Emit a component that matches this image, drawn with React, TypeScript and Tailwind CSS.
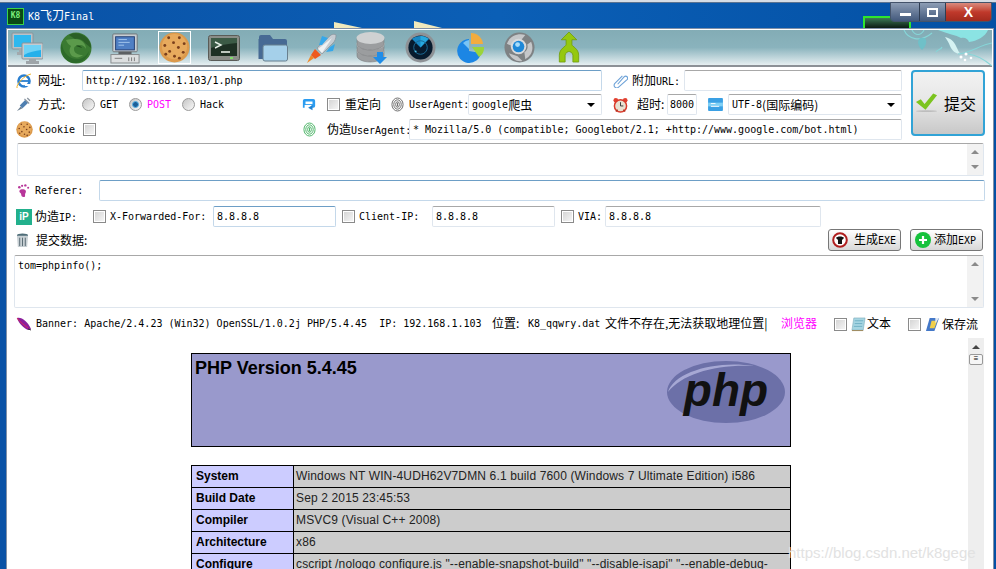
import React from 'react';

// Window font: latin cells are 6px wide, CJK is set a size up through <C>
const C: React.FC<{ children: React.ReactNode; className?: string }> = ({ children, className }) => (
  <span className={`text-[12px] font-['Noto_Sans_CJK_SC',sans-serif] ${className ?? ''}`}>{children}</span>
);

const Network = () => (
  <svg viewBox="0 0 32 32" className="w-[32px] h-[32px]">
    <rect x="1" y="1" width="21" height="16" rx="1" fill="#b9c2c8" stroke="#8b9499" />
    <rect x="3" y="3" width="17" height="12" fill="#2fb8ee" />
    <path d="M8 17h7v3h3v3H6v-3h2z" fill="#a2a9ad" />
    <rect x="11" y="11" width="21" height="16" rx="1" fill="#c4cbd0" stroke="#8b9499" />
    <rect x="13" y="13" width="17" height="12" fill="#25b0ea" />
    <path d="M13 13h17v5c-6 1-12 2-17 5z" fill="#6fd2f5" />
    <path d="M18 27h7v2h3v3H15v-3h3z" fill="#9ea5a9" />
  </svg>
);

const GreenFox = () => (
  <svg viewBox="0 0 32 32" className="w-[32px] h-[32px]">
    <circle cx="16" cy="16" r="15.5" fill="#3a7a32" />
    <path d="M9 3c5-3 13-2 18 3 3 3 4 7 4 10l-6-5c-2-3-6-5-10-4z" fill="#2a5f26" />
    <path d="M2 12c1 9 8 16 17 15 5-1 8-4 10-8-1 7-7 12-14 12C7 31 1 24 1 16c0-1 0-3 1-4z" fill="#2c6a2a" />
    <path d="M6 8c1 3 3 5 5 6-2 3-2 7 1 10 3 2 8 2 11-1-5 0-9-2-9-6 0-3 3-4 6-4 3 0 5 2 6 4 0-6-5-10-11-10-3 0-6 0-9 1z" fill="#5b9a4b" />
    <path d="M16 14c2-1 5 0 6 2-2-1-4-1-6-2z" fill="#1f4d1c" />
  </svg>
);

const Computer = () => (
  <svg viewBox="0 0 32 32" className="w-[30px] h-[32px]">
    <rect x="3" y="1" width="26" height="19" rx="1" fill="#c7cdd2" stroke="#6f7478" />
    <rect x="6" y="4" width="20" height="14" fill="#4f7fc4" stroke="#223c70" />
    <path d="M9 7h9M9 10h12M9 13h6" stroke="#a5c8ee" />
    <rect x="9" y="20" width="14" height="3" fill="#5c6063" />
    <rect x="1" y="23" width="30" height="9" fill="#dcdfe0" stroke="#84888a" />
    <path d="M5 27h8M20 26v4M23 26v4M26 26v4" stroke="#777" />
  </svg>
);

const Cookie: React.FC<{ size: string }> = ({ size }) => (
  <svg viewBox="0 0 32 32" className={size}>
    <circle cx="16" cy="16" r="15.5" fill="#dc9a4c" />
    <circle cx="16" cy="15" r="13" fill="#e7aa5d" />
    {[[10, 6], [21, 6], [15, 11], [26, 12], [6, 14], [20, 16], [11, 20], [25, 21], [16, 25], [7, 23], [21, 27]].map(([x, y]) => (
      <circle key={`${x}-${y}`} cx={x} cy={y} r="1.5" fill="#7a3f1c" />
    ))}
  </svg>
);

const Terminal = () => (
  <svg viewBox="0 0 32 26" className="w-[32px] h-[26px]">
    <rect x="0.5" y="0.5" width="31" height="25" rx="2" fill="#8a8d88" stroke="#5a5c58" />
    <rect x="3" y="3" width="26" height="18" fill="#1e3024" />
    <path d="M3 3h26v5c-9 1-18 2-26 5z" fill="#3c5a46" />
    <path d="M7 7l6 3-6 3" fill="none" stroke="#e8f0e8" strokeWidth="1.4" />
    <path d="M13 17h9" stroke="#e8f0e8" strokeWidth="1.6" />
    <rect x="22" y="22" width="3" height="2" fill="#7fdc6a" />
  </svg>
);

const Folder = () => (
  <svg viewBox="0 0 30 28" className="w-[30px] h-[28px]">
    <path d="M1 3a2 2 0 012-2h9l3 4h12a2 2 0 012 2v4H1z" fill="#476a94" />
    <rect x="0.5" y="5" width="5" height="20" fill="#476a94" />
    <rect x="5" y="11" width="24.5" height="16" rx="2" fill="#a5d0ea" stroke="#69808f" />
  </svg>
);

const Rocket = () => (
  <svg viewBox="0 0 32 32" className="w-[32px] h-[32px]">
    <path d="M1 31l7-5-3-3z" fill="#f08a28" />
    <path d="M9 17l6 6-6 4-4-4z" fill="#ee5a1f" />
    <path d="M11 16L25 3c2-1 4-1 5 0 0 3-1 6-3 8L16 22z" fill="#c6ccd2" stroke="#848c94" strokeWidth="0.6" />
    <path d="M12 17L26 6l-10 15z" fill="#eef1f3" />
    <path d="M13 13L16 4l6 2-6 7zM20 20l7-1 2-7-5 3z" fill="#35a7ea" />
  </svg>
);

const Database = () => (
  <svg viewBox="0 0 32 32" className="w-[32px] h-[32px]">
    {[18, 12, 6].map((y) => (
      <g key={y}>
        <path d={`M1 ${y}v6c0 3 6 6 13 6s14-3 14-6v-6z`} fill="#9b9d9f" stroke="#737577" strokeWidth="0.5" />
        <ellipse cx="14.5" cy={y} rx="14" ry="6" fill="#cfd1d2" />
      </g>
    ))}
    <path d="M21 20h6v5h4l-7 7-7-7h4z" fill="#1f8de8" />
  </svg>
);

const Radar = () => (
  <svg viewBox="0 0 32 32" className="w-[31px] h-[31px]">
    <circle cx="16" cy="16" r="15.5" fill="#8e9296" />
    <circle cx="16" cy="16" r="12.5" fill="#071b2e" />
    <path d="M16 16L7 7c5-4 13-4 18 0z" fill="#1787c4" />
    <path d="M16 16V4c3 0 6 1 8 3z" fill="#28a9de" />
    <circle cx="16" cy="16" r="7" fill="none" stroke="#1b6a95" />
    <circle cx="11" cy="20" r="1" fill="#4fc6ef" />
  </svg>
);

const Pie = () => (
  <svg viewBox="0 0 30 32" className="w-[30px] h-[32px]">
    <path d="M14 7a12 12 0 1 0 12 14L14 19z" fill="#1c86e4" />
    <path d="M8 11a10 10 0 0 1 6-3v9z" fill="#79c4f5" />
    <path d="M16 1a12 12 0 0 1 12 11H16z" fill="#f2ac3f" />
    <path d="M17 15h12a11 11 0 0 1-5 10z" fill="#9bd43a" />
  </svg>
);

const Orb = () => (
  <svg viewBox="0 0 32 32" className="w-[31px] h-[31px]">
    <circle cx="16" cy="16" r="15.5" fill="#7e8284" />
    <path d="M3 12C6 4 14 1 22 3l-4 5c-5-1-9 1-11 6zM28 10c3 7 1 14-6 18l-1-7c3-2 4-5 3-8zM5 22l9 3 5 5c-6 1-11-2-14-8z" fill="#c5c7c9" />
    <circle cx="15" cy="15" r="8" fill="#d8dadc" />
    <circle cx="15" cy="15" r="6" fill="#1e88d8" />
    <circle cx="14" cy="13" r="2.5" fill="#a7dcfa" />
  </svg>
);

const Merge = () => (
  <svg viewBox="0 0 22 32" className="w-[22px] h-[31px]">
    <path d="M11 0l8 8h-5v5c0 2 7 4 7 11v7h-6v-7c0-3-4-4-4-4s-4 1-4 4v7H1v-7c0-7 7-9 7-11V8H3z" fill="#95c80f" stroke="#6e9a0a" strokeWidth="0.8" />
  </svg>
);

const IeIcon = () => (
  <svg viewBox="0 0 16 16" className="w-[16px] h-[16px]">
    <circle cx="8" cy="8" r="5.5" fill="none" stroke="#2a7fd0" strokeWidth="2.6" />
    <path d="M4 8h9" stroke="#2a7fd0" strokeWidth="1.8" />
    <path d="M9 11h5v2H9z" fill="#fff" />
    <path d="M1 15C0 11 9 2 15 1" fill="none" stroke="#f0b429" strokeWidth="1" />
  </svg>
);

const Syringe = () => (
  <svg viewBox="0 0 16 16" className="w-[15px] h-[15px]">
    <path d="M1 15l4-5 2 2z" fill="#6b7f92" />
    <path d="M4 9l6-6 3 3-6 6z" fill="#4f7fb0" />
    <path d="M9 2l5 5M12 1l3 3" stroke="#8c97a2" strokeWidth="1.4" />
  </svg>
);

const Refresh = () => (
  <svg viewBox="0 0 16 16" className="w-[14px] h-[14px]">
    <path d="M3 1h10a2 2 0 012 2v6a2 2 0 01-2 2h-2v-3H3v3H1V3a2 2 0 012-2z" fill="#2b9cf0" />
    <path d="M4 4h8v3H4z" fill="#fff" />
    <path d="M12 8v6l-5-3z" fill="#1f80d0" />
  </svg>
);

const Fingerprint: React.FC<{ color: string }> = ({ color }) => (
  <svg viewBox="0 0 14 16" className="w-[13px] h-[15px]" fill="none" stroke={color}>
    <ellipse cx="7" cy="8" rx="6" ry="7" />
    <ellipse cx="7" cy="8" rx="4" ry="5" />
    <ellipse cx="7" cy="8" rx="2" ry="3" />
    <path d="M7 6v4" />
  </svg>
);

const Clip = () => (
  <svg viewBox="0 0 16 16" className="w-[15px] h-[15px]" fill="none" stroke="#6fa3d8" strokeWidth="1.2">
    <path d="M5 12l7-8a2 2 0 013 3l-9 8a2.5 2.5 0 01-4-4l8-8" />
  </svg>
);

const Clock = () => (
  <svg viewBox="0 0 16 16" className="w-[15px] h-[16px]">
    <circle cx="3" cy="3" r="2.5" fill="#e2402f" />
    <circle cx="13" cy="3" r="2.5" fill="#e2402f" />
    <circle cx="8" cy="9" r="6.5" fill="#e8e0d0" stroke="#d93a2a" strokeWidth="1.6" />
    <path d="M8 5v4h3" stroke="#333" fill="none" />
    <path d="M3 15l2-2M13 15l-2-2" stroke="#b5301f" strokeWidth="1.4" />
  </svg>
);

const BlueBox = () => (
  <svg viewBox="0 0 16 14" className="w-[15px] h-[13px]">
    <rect width="16" height="14" rx="1" fill="#3aa0e4" />
    <rect y="5" width="16" height="4" fill="#7fd0f6" />
    <path d="M3 6h5M3 9h9" stroke="#fff" />
  </svg>
);

const Check = () => (
  <svg viewBox="0 0 24 20" className="w-[23px] h-[20px]">
    <path d="M1 9l5-3 4 5L19 0l4 2-12 15z" fill="#7cc41f" />
    <ellipse cx="12" cy="18.5" rx="11" ry="1" fill="#bdbdbd" />
  </svg>
);

const Feet = () => (
  <svg viewBox="0 0 14 16" className="w-[13px] h-[15px]" fill="#b8379a">
    <path d="M4 7c4-1 7 1 5 4-1 2 1 4-2 4-3 0-2-3-3-4-2-1-2-3 0-4z" />
    <circle cx="2.5" cy="4.5" r="1.4" />
    <circle cx="5.5" cy="3" r="1.2" />
    <circle cx="9" cy="2.5" r="1.3" />
    <circle cx="12" cy="5" r="1.1" />
  </svg>
);

const Trash = () => (
  <svg viewBox="0 0 14 16" className="w-[13px] h-[15px]">
    <ellipse cx="7" cy="2.5" rx="6" ry="2" fill="#4f6d78" />
    <path d="M1 3h12l-1 12H2z" fill="#c8d0d4" />
    <path d="M4 5v9M7 5v9M10 5v9" stroke="#53666e" />
  </svg>
);

const Feather = () => (
  <svg viewBox="0 0 16 14" className="w-[16px] h-[14px]">
    <path d="M1 1c5-1 10 3 14 11L12 13C8 11 3 7 1 1z" fill="#8a1f9c" />
    <path d="M1 1c3 4 7 7 11 10" stroke="#d92a5a" fill="none" />
    <path d="M12 12l3 1" stroke="#333" />
  </svg>
);

const StopIcon = () => (
  <svg viewBox="0 0 16 16" className="w-[16px] h-[16px]">
    <circle cx="8" cy="8" r="6.8" fill="#fff" stroke="#b01f1f" strokeWidth="2" />
    <path d="M4 6c1-2 7-2 8 0l-2 2v4H6V8z" fill="#111" />
  </svg>
);

const PlusIcon = () => (
  <svg viewBox="0 0 16 16" className="w-[16px] h-[16px]">
    <circle cx="8" cy="8" r="8" fill="#16c23c" />
    <path d="M8 4v8M4 8h8" stroke="#fff" strokeWidth="2.2" />
  </svg>
);

const DocIcon = () => (
  <svg viewBox="0 0 16 16" className="w-[15px] h-[15px]">
    <path d="M3 1h12l-2 13H1z" fill="#a5d5e2" stroke="#7aa9b8" strokeWidth="0.6" />
    <path d="M4 4h9M4 7h8M3 10h9" stroke="#6fb0c4" />
    <path d="M1 14h12v1H1z" fill="#9c8250" />
  </svg>
);

const PenIcon = () => (
  <svg viewBox="0 0 16 16" className="w-[15px] h-[15px]">
    <path d="M5 1h10L10 15H1z" fill="#4478c8" />
    <path d="M7 4h6l-3 8H5z" fill="#f0cf4a" />
    <path d="M11 1h4l-4 6z" fill="#dfe8f4" />
  </svg>
);

const Floral = () => (
  <svg viewBox="0 0 92 36" className="absolute right-0 top-0 w-[92px] h-[36px]" fill="none" stroke="#86d6d8" strokeWidth="1.1">
    <path d="M4 0c4 9 16 13 28 3M12 0c3 6 9 6 12 0M36 22c2-3 5-2 6-5" />
    <path d="M20 8c-4 4-1 9 2 12 3-3 6-8 3-12z" fill="#6fc0c8" stroke="none" />
    <path d="M38 0h50c-3 7-11 11-19 12-1-3-4-5-8-4-5-3-13-4-23-8z" fill="#8be3e3" stroke="none" />
    <path d="M45 7c5 1 9 4 11 9 2 4 3 7 5 8-5 0-9-3-11-8-1-3-3-6-5-9z" fill="#d4f2f2" stroke="none" />
    <path d="M58 24c12-1 22-9 34-11M68 24c9 1 17 6 24 12" />
    <circle cx="61" cy="27" r="1.5" fill="#fff" stroke="none" />
    <circle cx="66" cy="24" r="1.5" fill="#fff" stroke="none" />
    <circle cx="65" cy="30" r="1.3" fill="#fff" stroke="none" />
    <circle cx="71" cy="28" r="1.3" fill="#fff" stroke="none" />
  </svg>
);

const Radio: React.FC<{ on?: boolean }> = ({ on }) => (
  <span className="flex w-[13px] h-[13px] shrink-0 items-center justify-center rounded-full border border-[#9a9a9a] bg-gradient-to-br from-[#c4c4c4] to-[#fafafa]">
    {on && <span className="w-[7px] h-[7px] rounded-full bg-[#1d5f98] border border-[#58b4e8]" />}
  </span>
);

const Box = () => (
  <span className="block w-[13px] h-[13px] shrink-0 border border-[#8a8a8a] bg-gradient-to-br from-[#d2d2d2] to-[#f8f8f8] shadow-[inset_0_0_0_1px_#fff]" />
);

const plainField = 'flex items-center shrink-0 whitespace-nowrap bg-white border border-[#dfe6ee] border-t-[#a8a8a8] rounded-[2px] px-[3px]';
const blueField = 'flex items-center shrink-0 whitespace-nowrap bg-white border border-[#c4d8ea] border-t-[#6d9ec6] rounded-[2px] px-[3px]';

const Arrow = () => <span className="ml-auto mr-[3px] border-x-[4px] border-t-[4px] border-x-transparent border-t-black" />;

const ScrollArrows: React.FC<{ className?: string }> = ({ className }) => (
  <div className={`flex flex-col justify-between items-center w-[16px] py-[6px] bg-[#f2f2f2] ${className ?? ''}`}>
    <span className="border-x-[4px] border-b-[4px] border-x-transparent border-b-[#8a8a8a]" />
    <span className="border-x-[4px] border-t-[4px] border-x-transparent border-t-[#8a8a8a]" />
  </div>
);

const toolIcons = [
  <Network />, <GreenFox />, <Computer />, <Cookie size="w-[31px] h-[31px]" />, <Terminal />, <Folder />,
  <Rocket />, <Database />, <Radar />, <Pie />, <Orb />, <Merge />,
];

const infoRows = [
  ['System', 'Windows NT WIN-4UDH62V7DMN 6.1 build 7600 (Windows 7 Ultimate Edition) i586'],
  ['Build Date', 'Sep 2 2015 23:45:53'],
  ['Compiler', 'MSVC9 (Visual C++ 2008)'],
  ['Architecture', 'x86'],
  ['Configure', 'cscript /nologo configure.js "--enable-snapshot-build" "--disable-isapi" "--enable-debug-pack" "--without-mssql" "--without-pdo-mssql"'],
];

export default function App() {
  return (
    <div className="relative w-[996px] h-[569px] overflow-hidden bg-gradient-to-r from-[#0a52a6] via-[#0b5fb6] to-[#0450a4] text-[10px] leading-[14px] text-black font-['DejaVu_Sans_Mono','Noto_Sans_CJK_SC',monospace]">
      {/* desktop bits showing through the glass */}
      <div className="absolute left-[334px] top-[22px] w-[28px] h-[6px] bg-[#f0e9bd] [clip-path:polygon(0_0,100%_100%,0_100%)]" />
      <div className="absolute left-[414px] top-[21px] w-[28px] h-[7px] bg-[#f0e9bd] [clip-path:polygon(0_0,100%_100%,0_100%)]" />
      <div className="absolute left-[863px] top-[16px] w-[48px] h-[12px] border-2 border-b-0 border-[#2ee62e] bg-gradient-to-b from-[#3c7c56] to-[#0c1c14]" />

      <div className="h-[3px] bg-[#d6dde6] border-b border-[#5b7391]" />

      {/* title bar */}
      <div className="flex items-center h-[26px] pl-[7px] text-white">
        <div className="flex items-center justify-center w-[17px] h-[17px] bg-[#0a4a14] border border-[#3bd44a] text-[8px] font-bold text-[#7cf07c] shrink-0">K8</div>
        <span className="ml-[4px] text-[10px]">K8<C className="text-[11px]">飞刀</C>Final</span>
      </div>

      {/* caption buttons */}
      <div className="absolute left-[890px] top-[2px] flex h-[20px] w-[102px] rounded-b-[4px] border border-[#44536a] overflow-hidden">
        <div className="flex w-[29px] items-end justify-center pb-[5px] bg-gradient-to-b from-[#8d9db4] to-[#43597c] border-r border-[#2f3d52]">
          <span className="w-[11px] h-[3px] bg-white" />
        </div>
        <div className="flex w-[26px] items-center justify-center bg-gradient-to-b from-[#8d9db4] to-[#43597c] border-r border-[#2f3d52]">
          <span className="w-[11px] h-[9px] border-2 border-white" />
        </div>
        <div className="flex flex-1 items-center justify-center bg-gradient-to-b from-[#d98a7e] via-[#c0392b] to-[#a32a1e] text-white text-[14px] font-bold font-['Liberation_Sans',sans-serif]">X</div>
      </div>

      {/* client area */}
      <div className="ml-[7px] mr-[3px] h-[540px] border-l border-r border-white border-t bg-white outline-1 outline-[#8090a8]">
        <div className="relative flex items-center h-[37px] border-b-2 border-[#8c9196] bg-gradient-to-b from-[#83acb5] via-[#8ab3bd] via-50% to-[#e6eff1] pl-[2px]">
          <Floral />
          {toolIcons.map((icon, i) => (
            <div key={i} className={`flex items-center justify-center w-[33px] h-[33px] mr-[16.3px] shrink-0 ${i === 3 ? 'border border-white' : ''}`}>
              {icon}
            </div>
          ))}
        </div>

        {/* request form */}
        <div className="flex pl-[8px] pt-[3px]">
          <div className="flex flex-col w-[886px] shrink-0">
            <div className="flex items-center h-[21px]">
              <span className="flex w-[22px] shrink-0"><IeIcon /></span>
              <span className="w-[44px] shrink-0"><C>网址:</C></span>
              <div className={`${blueField} w-[520px] h-[21px]`}>http://192.168.1.103/1.php</div>
              <span className="flex w-[19px] ml-[11px] shrink-0"><Clip /></span>
              <span className="w-[52px] shrink-0 whitespace-nowrap"><C>附加</C>URL:</span>
              <div className={`${plainField} w-[218px] h-[21px]`} />
            </div>

            <div className="flex items-center h-[21px] mt-[3px]">
              <span className="flex w-[22px] shrink-0"><Syringe /></span>
              <span className="w-[44px] shrink-0"><C>方式:</C></span>
              <span className="flex w-[18px] shrink-0"><Radio /></span>
              <span className="w-[29px] shrink-0">GET</span>
              <span className="flex w-[18px] shrink-0"><Radio on /></span>
              <span className="w-[35px] shrink-0 text-[#ff00ff]">POST</span>
              <span className="flex w-[18px] shrink-0"><Radio /></span>
              <span className="w-[102px] shrink-0">Hack</span>
              <span className="flex w-[25px] shrink-0"><Refresh /></span>
              <span className="flex w-[18px] shrink-0"><Box /></span>
              <span className="w-[46px] shrink-0"><C>重定向</C></span>
              <span className="flex w-[18px] shrink-0"><Fingerprint color="#666666" /></span>
              <span className="w-[59px] shrink-0">UserAgent:</span>
              <div className={`${plainField} w-[134px] h-[21px]`}>google<C>爬虫</C><Arrow /></div>
              <span className="flex w-[24px] ml-[11px] shrink-0"><Clock /></span>
              <span className="w-[30px] shrink-0 whitespace-nowrap"><C>超时:</C></span>
              <div className={`${plainField} w-[30px] h-[21px] !px-[2px]`}>8000</div>
              <span className="flex w-[20px] ml-[11px] shrink-0"><BlueBox /></span>
              <div className={`${plainField} w-[174px] h-[21px]`}>UTF-8<C>(国际编码)</C><Arrow /></div>
            </div>

            <div className="flex items-center h-[21px] mt-[4px]">
              <span className="flex w-[23px] shrink-0"><Cookie size="w-[17px] h-[17px]" /></span>
              <span className="w-[44px] shrink-0">Cookie</span>
              <span className="flex w-[220px] shrink-0"><Box /></span>
              <span className="flex w-[24px] shrink-0"><Fingerprint color="#44b060" /></span>
              <span className="w-[82px] shrink-0 whitespace-nowrap"><C>伪造</C>UserAgent:</span>
              <div className={`${plainField} w-[493px] h-[21px]`}>* Mozilla/5.0 (compatible; Googlebot/2.1; +http://www.google.com/bot.html)</div>
            </div>
          </div>

          <div className="flex items-center w-[74px] h-[66px] ml-[9px] pl-[2px] shrink-0 rounded-[4px] border-2 border-[#31a3d6] bg-gradient-to-b from-[#f2f2f2] via-[#e6e6e6] to-[#c8c8c8]">
            <Check />
            <span className="ml-[6px] text-[16px] whitespace-nowrap font-['Noto_Sans_CJK_SC',sans-serif]">提交</span>
          </div>
        </div>

        {/* cookie text */}
        <div className={`${plainField} justify-end w-[967px] h-[33px] ml-[9px] mt-[3px] !px-0`}>
          <ScrollArrows className="h-full" />
        </div>

        <div className="flex items-center h-[21px] ml-[9px] mt-[4px]">
          <span className="flex w-[18px] shrink-0"><Feet /></span>
          <span className="w-[64px] shrink-0">Referer:</span>
          <div className={`${blueField} w-[886px] h-[21px]`} />
        </div>

        {/* spoofed address */}
        <div className="flex items-center h-[21px] ml-[8px] mt-[5px]">
          <span className="flex items-center justify-center w-[16px] h-[16px] mr-[3px] shrink-0 bg-[#22b08c] text-white text-[10px] font-bold font-['Liberation_Sans',sans-serif]">iP</span>
          <span className="w-[58px] shrink-0 whitespace-nowrap"><C>伪造</C>IP:</span>
          <span className="flex w-[17px] shrink-0"><Box /></span>
          <span className="w-[103px] shrink-0">X-Forwarded-For:</span>
          <div className={`${blueField} w-[123px] h-[21px]`}>8.8.8.8</div>
          <span className="flex w-[17px] ml-[6px] shrink-0"><Box /></span>
          <span className="w-[73px] shrink-0">Client-IP:</span>
          <div className={`${plainField} w-[123px] h-[21px]`}>8.8.8.8</div>
          <span className="flex w-[17px] ml-[6px] shrink-0"><Box /></span>
          <span className="w-[27px] shrink-0">VIA:</span>
          <div className={`${plainField} w-[216px] h-[21px]`}>8.8.8.8</div>
        </div>

        <div className="flex items-center h-[22px] ml-[8px] mt-[2px]">
          <span className="flex w-[20px] shrink-0"><Trash /></span>
          <C>提交数据:</C>
          <div className="flex items-center w-[73px] h-[22px] ml-auto rounded-[3px] border border-[#777] bg-gradient-to-b from-white to-[#d8d8d8] pl-[3px] whitespace-nowrap">
            <StopIcon />
            <span className="ml-[6px]"><C>生成</C>EXE</span>
          </div>
          <div className="flex items-center w-[73px] h-[22px] ml-[9px] mr-[9px] rounded-[3px] border border-[#777] bg-gradient-to-b from-white to-[#d8d8d8] pl-[4px] whitespace-nowrap">
            <PlusIcon />
            <span className="ml-[3px]"><C>添加</C>EXP</span>
          </div>
        </div>

        {/* post body */}
        <div className={`${plainField} !items-start w-[970px] h-[53px] ml-[6px] mt-[4px] !px-0`}>
          <span className="ml-[3px] mt-[3px]">tom=phpinfo();</span>
          <ScrollArrows className="h-full ml-auto" />
        </div>

        {/* banner */}
        <div className="flex items-center h-[16px] ml-[8px] mt-[8px] whitespace-pre">
          <span className="flex w-[20px] shrink-0"><Feather /></span>
          <span className="w-[456px] shrink-0">Banner: Apache/2.4.23 (Win32) OpenSSL/1.0.2j PHP/5.4.45  IP: 192.168.1.103</span>
          <span className="w-[36px] shrink-0"><C>位置:</C></span>
          <span className="w-[77px] shrink-0">K8_qqwry.dat</span>
          <span className="w-[176px] shrink-0"><C>文件不存在,无法获取地理位置|</C></span>
          <span className="w-[53px] shrink-0"><C className="text-[#ff00ff]">浏览器</C></span>
          <span className="flex w-[17px] shrink-0"><Box /></span>
          <span className="flex w-[16px] shrink-0"><DocIcon /></span>
          <span className="w-[41px] shrink-0"><C>文本</C></span>
          <span className="flex w-[17px] shrink-0"><Box /></span>
          <span className="flex w-[17px] shrink-0"><PenIcon /></span>
          <C>保存流</C>
        </div>

        {/* php info page */}
        <div className="flex ml-[6px] mt-[6px] h-[240px] overflow-hidden font-['Liberation_Sans',sans-serif] text-[12px]">
          <div className="w-[954px] shrink-0 pt-[15px]">
            <div className="relative w-[600px] h-[94px] mx-auto border border-black bg-[#9999cc]">
              <h1 className="ml-[3px] mt-[3px] text-[18px] leading-[22px] font-bold">PHP Version 5.4.45</h1>
              <svg viewBox="0 0 120 64" className="absolute right-[4px] top-[6px] w-[120px] h-[64px]">
                <ellipse cx="60" cy="32" rx="59" ry="31" fill="#6c70a8" />
                <path d="M2 32C8 12 50 0 88 6c-38-2-72 8-86 26z" fill="#a6a8d4" />
                <text x="60" y="46" textAnchor="middle" fontFamily="Liberation Sans" fontSize="46" fontWeight="bold" fontStyle="italic" fill="#111">php</text>
              </svg>
            </div>
            <table className="w-[600px] mx-auto mt-[18px] border-collapse table-fixed">
              <tbody>
                {infoRows.map(([name, value]) => (
                  <tr key={name} className="h-[22px]">
                    <td className="w-[102px] border border-black bg-[#ccccff] px-[4px] font-bold align-top pt-[3px]">{name}</td>
                    <td className="border border-black bg-[#cccccc] px-[2px] text-[#222222] tracking-[0.14px] align-top pt-[3px]">{value}</td>
                  </tr>
                ))}
              </tbody>
            </table>
          </div>
          <div className="relative w-[16px] shrink-0 bg-[#eeeeee]">
            <span className="absolute left-[4px] top-[7px] border-x-[4px] border-b-[4px] border-x-transparent border-b-[#444]" />
            <span className="absolute left-[1px] top-[16px] w-[14px] h-[11px] rounded-[2px] border border-[#999] bg-[#f6f6f6] text-center leading-[7px] text-[8px]">≡</span>
          </div>
        </div>
      </div>

      <div className="absolute left-[788px] top-[544px] text-[15px] leading-[18px] text-[#e2e2e2] font-['Liberation_Sans',sans-serif]">https://blog.csdn.net/k8gege</div>
    </div>
  );
}
